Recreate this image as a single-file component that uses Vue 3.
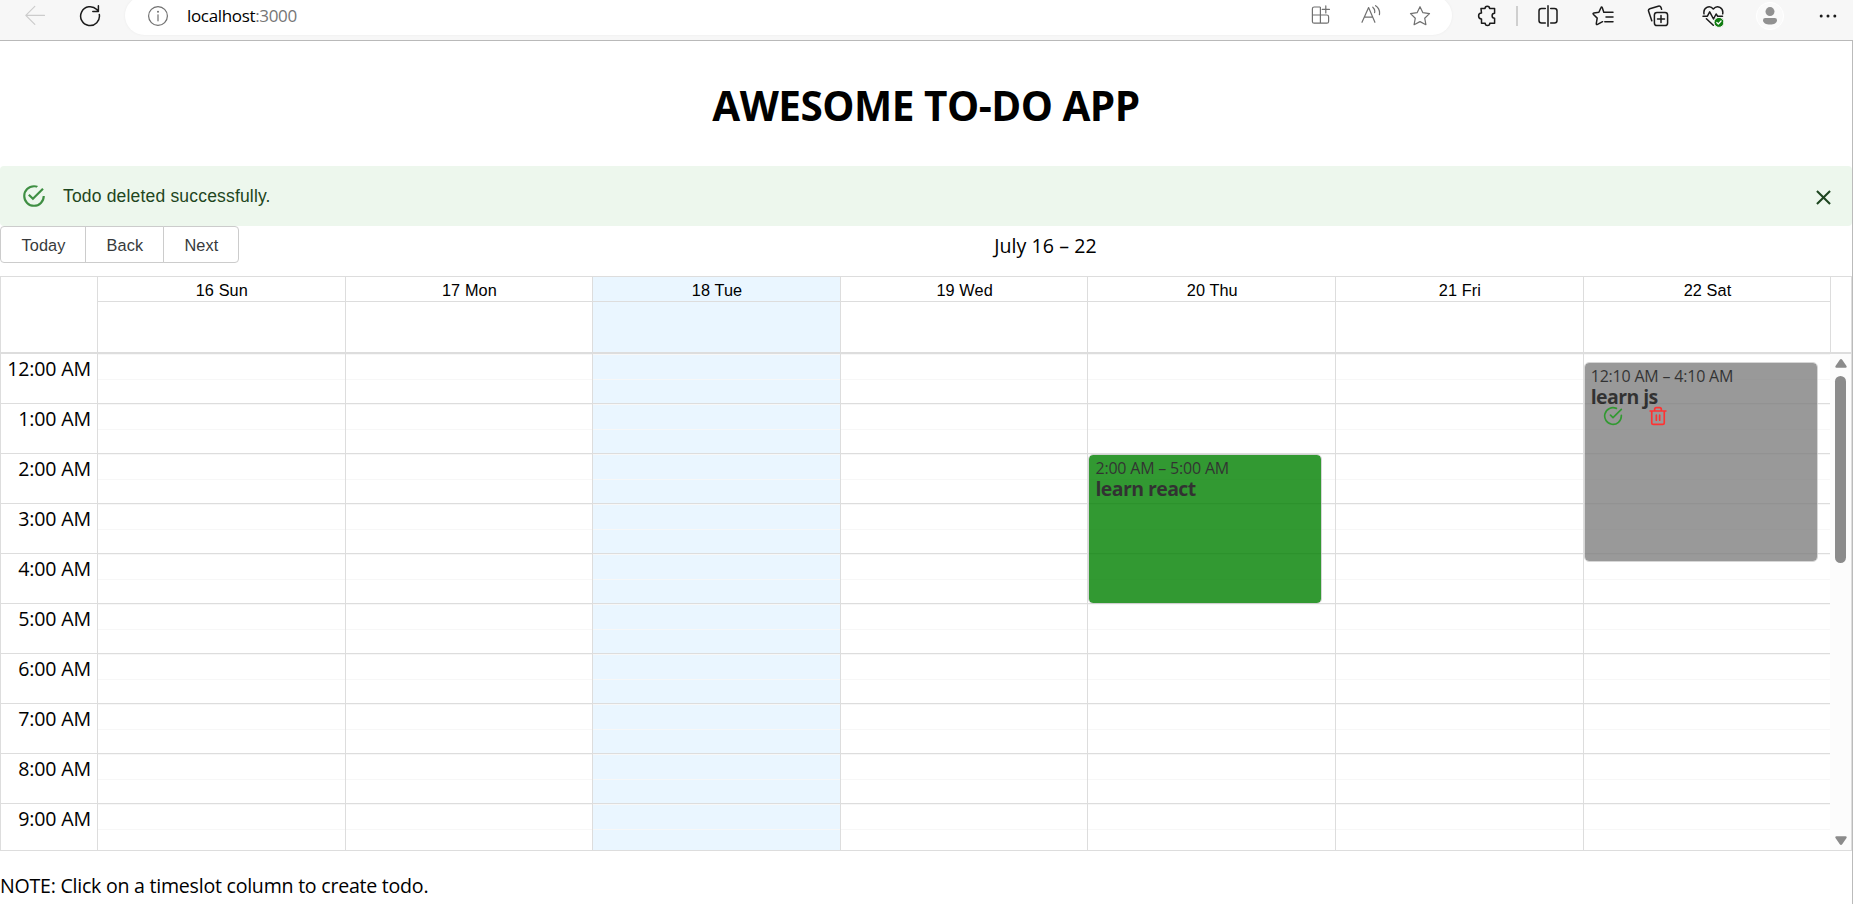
<script setup>
const hours = ['12:00 AM', '1:00 AM', '2:00 AM', '3:00 AM', '4:00 AM', '5:00 AM', '6:00 AM', '7:00 AM', '8:00 AM', '9:00 AM']

const days = [
  { label: '16 Sun' },
  { label: '17 Mon' },
  { label: '18 Tue', today: true },
  { label: '19 Wed' },
  { label: '20 Thu', event: { time: '2:00 AM – 5:00 AM', title: 'learn react', start: 100, length: 150, done: true } },
  { label: '21 Fri' },
  { label: '22 Sat', event: { time: '12:10 AM – 4:10 AM', title: 'learn js', start: 8, length: 200, done: false } },
]
</script>

<template>
  <div class="window">
    <header class="browser">
      <svg class="ico back" width="20" height="20" viewBox="0 0 20 20"><path d="M19.5 10.3H.8M9.8 1.3.8 10.3l9 9" /></svg>
      <svg class="ico reload" width="22" height="22" viewBox="0 0 22 22"><path d="M20.3 9.5A9.4 9.4 0 1 1 17.8 4.6L19.3 6.2M19.4.8v5.6h-5.6" /></svg>
      <div class="address">
        <svg class="ico info" width="22" height="22" viewBox="0 0 22 22"><circle cx="11" cy="11" r="9.4" /><path d="M11 9.8v6" /><circle class="dot" cx="11" cy="6.8" r="1" /></svg>
        <span class="url">localhost<span class="port">:3000</span></span>
        <svg class="ico apps" width="20" height="20" viewBox="0 0 20 20"><path d="M9 2H3.2A1.8 1.8 0 0 0 1.4 3.8v12.6a1.8 1.8 0 0 0 1.8 1.8h12.6a1.8 1.8 0 0 0 1.8-1.8v-4.6a1.8 1.8 0 0 0-1.8-1.8H1.4M9.4 2.4v15.8M14.8.8v7.2M11.2 4.4h7.2" /></svg>
        <svg class="ico read" width="21" height="20" viewBox="0 0 21 20"><path d="M1 17.3 7.6 2.6l6.3 14.7M3.3 12.2h8.5M11.8 2.2a5.5 5.5 0 0 1 1.8 5.4M14.6.7a9 9 0 0 1 3.8 9" /></svg>
        <svg class="ico star" width="22" height="22" viewBox="0 0 22 22"><path d="m11 1.7 2.9 6 6.6.9-4.8 4.6 1.2 6.5-5.9-3.1-5.9 3.1 1.2-6.5-4.8-4.6 6.6-.9z" /></svg>
      </div>
      <svg class="ico puzzle" width="21" height="22" viewBox="0 0 21 22"><path d="M4 3.6h4a2.3 2.3 0 0 1 4.6 0h5v4.7a2.5 2.5 0 1 0 0 5v5h-4.8a2.3 2.3 0 0 1-4.6 0H4.5v-4.4a2.9 2.9 0 0 1 0-5.8z" /></svg>
      <span class="rule"></span>
      <svg class="ico split" width="22" height="22" viewBox="0 0 22 22"><path d="M8.3 3.6H4.5a2.5 2.5 0 0 0-2.5 2.5v9.5a2.5 2.5 0 0 0 2.5 2.5h3.8M13.7 3.6h3.8A2.5 2.5 0 0 1 20 6.1v9.5a2.5 2.5 0 0 1-2.5 2.5h-3.8M11 .8v20.4" /></svg>
      <svg class="ico favs" width="22" height="22" viewBox="0 0 22 22"><path d="m11.8 7.2-1.5-4.4q-.7-1.8-1.4 0L6.9 7.3l-5 .7q-1.5.3-.4 1.5l3.7 3.6-.9 5.4q-.1 1.6 1.3.9l5-2.7M12.8 7.2H21M14 12h7M12.8 16.8H21" /></svg>
      <svg class="ico collect" width="22" height="22" viewBox="0 0 22 22"><rect x="7.4" y="7.4" width="13.2" height="13.2" rx="2.6" /><path d="M14 10.6v7M10.5 14.1h7M4.8 15.7 1.6 6.2Q1 4.3 2.8 3.7l8.4-2.5q2-.6 2.8 1.2l.6 1.8" /></svg>
      <svg class="ico heart" width="23" height="23" viewBox="0 0 23 23"><path d="M2 8.8C1 3 7.4-.8 11.3 4c4-4.8 10.4-1 9.4 4.8M1 11.2h4.4l2.3-4.4 3.8 7.2 2.6-5 1.6 2.2h4.8M4.4 13.7l6.9 6.6" /><circle class="ok" cx="17" cy="17.4" r="5" /><path class="tick" d="m14.8 17.5 1.5 1.5 2.8-3" /></svg>
      <svg class="avatar" width="28" height="28" viewBox="0 0 28 28"><circle cx="14" cy="14" r="13.6" fill="#fafafa" stroke="#fff" /><circle cx="14" cy="9.6" r="4.5" /><path d="M9.2 16h9.6a2.2 2.2 0 0 1 2.2 2.2c0 2.5-3 4.4-7 4.4s-7-1.9-7-4.4A2.2 2.2 0 0 1 9.2 16z" /></svg>
      <svg class="more" width="18" height="6" viewBox="0 0 18 6"><circle cx="2.2" cy="3" r="1.5" /><circle cx="9" cy="3" r="1.5" /><circle cx="15.8" cy="3" r="1.5" /></svg>
    </header>

    <main class="page">
      <h1><span>AWESOME TO-DO APP</span></h1>

      <div class="alert">
        <svg class="success" width="26" height="26" viewBox="0 0 24 24"><path d="M20,12A8,8 0 0,1 12,20A8,8 0 0,1 4,12A8,8 0 0,1 12,4C12.76,4 13.5,4.11 14.2, 4.31L15.77,2.74C14.61,2.26 13.34,2 12,2A10,10 0 0,0 2,12A10,10 0 0,0 12,22A10,10 0 0,0 22,12M7.91,10.08L6.5,11.5L11,16L21,6L19.59,4.58L11,13.17L7.91,10.08Z" /></svg>
        <span class="message">Todo deleted successfully.</span>
        <svg class="close" width="25" height="25" viewBox="0 0 24 24"><path d="M19 6.41L17.59 5 12 10.59 6.41 5 5 6.41 10.59 12 5 17.59 6.41 19 12 13.41 17.59 19 19 17.59 13.41 12z" /></svg>
      </div>

      <div class="toolbar">
        <div class="group">
          <button class="today-btn">Today</button>
          <button class="back-btn">Back</button>
          <button class="next-btn">Next</button>
        </div>
        <div class="range"><span>July 16 – 22</span></div>
      </div>

      <section class="calendar">
        <div class="head">
          <div class="corner"></div>
          <div class="days">
            <div v-for="d in days" :key="d.label" class="day-head" :class="{ today: d.today }">
              <div class="day-label">{{ d.label }}</div>
            </div>
          </div>
          <div class="head-end"></div>
        </div>
        <div class="body">
          <div class="gutter">
            <div v-for="h in hours" :key="h" class="hour"><span>{{ h }}</span></div>
          </div>
          <div class="days">
            <div v-for="d in days" :key="d.label" class="day" :class="{ today: d.today }">
              <div v-for="h in hours" :key="h" class="slots"><i></i><i></i></div>
              <div v-if="d.event" class="event" :class="{ done: d.event.done }" :style="{ top: d.event.start + 'px', height: d.event.length + 'px' }">
                <div class="time">{{ d.event.time }}</div>
                <div class="title">{{ d.event.title }}</div>
                <div v-if="!d.event.done" class="actions">
                  <svg width="20" height="20" viewBox="0 0 24 24" stroke="#008000"><path d="M22 11.08V12a10 10 0 1 1-5.93-9.14M22 4 12 14.01l-3-3" /></svg>
                  <svg width="20" height="20" viewBox="0 0 24 24" stroke="#ff0000"><path d="M2.5 6h19M19.5 6v14a2 2 0 0 1-2 2h-11a2 2 0 0 1-2-2V6m3.5 0V4a2 2 0 0 1 2-2h4a2 2 0 0 1 2 2v2M10 11v6M14 11v6" /></svg>
                </div>
              </div>
            </div>
          </div>
          <div class="scrollbar">
            <svg width="12" height="9" viewBox="0 0 12 9"><path d="M6 0q.7 0 1.2.8L11.5 7q.7 1.7-1 1.7h-9Q-.2 8.7.5 7L4.8.8Q5.3 0 6 0z" /></svg>
            <div class="thumb"></div>
            <svg class="down" width="12" height="9" viewBox="0 0 12 9"><path d="M6 9q.7 0 1.2-.8L11.5 2q.7-1.7-1-1.7h-9Q-.2.3.5 2l4.3 6.2Q5.3 9 6 9z" /></svg>
          </div>
        </div>
      </section>

      <p class="note">NOTE: Click on a timeslot column to create todo.</p>
    </main>
  </div>
</template>

<style>
body { background: #fff; overflow: hidden; }
</style>

<style scoped>
.window { width: 1853px; height: 904px; overflow: hidden; font-family: "Open Sans", "Noto Sans", sans-serif; color: #000; }
.window * { box-sizing: border-box; }

.browser { height: 41px; display: flex; align-items: flex-start; background: #f7f7f7; border-bottom: 1px solid #b9b9b9; overflow: hidden; }
.browser svg { flex: none; }
.ico { fill: none; stroke: #1b1b1b; stroke-width: 1.5; stroke-linecap: round; stroke-linejoin: round; margin-top: 5px; }
.back { margin-left: 25px; stroke: #ccc; stroke-width: 1.2; }
.reload { margin-left: 34px; }
.address { width: 1327px; height: 39px; margin: -4px 0 0 24px; border-radius: 20px; background: #fff; display: flex; align-items: flex-start; box-shadow: 0 0 3px rgba(0, 0, 0, .05); }
.address .ico { stroke: #707070; stroke-width: 1.2; margin-top: 9px; }
.address .info { margin-left: 21.5px; }
.address .dot { fill: #707070; stroke: none; }
.url { margin: 6.5px 0 0 18.5px; width: 1123px; line-height: 26px; font-size: 17px; letter-spacing: -.34px; white-space: nowrap; }
.port { color: #767676; }
.address .apps { margin-left: .5px; }
.address .read { margin-left: 30.5px; }
.address .star { margin-left: 27px; }
.puzzle { margin-left: 25px; }
.rule { width: 2px; height: 20px; margin: 6px 0 0 18px; background: #cfcfcf; }
.split { margin-left: 19px; }
.favs { margin-left: 33px; }
.collect { margin-left: 33px; }
.heart { margin-left: 33px; }
.avatar { margin: 2px 0 0 31px; fill: #919191; }
.more { margin: 13px 0 0 35px; fill: #1b1b1b; }
.heart .ok { fill: #107c10; stroke: #f7f7f7; stroke-width: 1; }
.heart .tick { stroke: #fff; stroke-width: 1.2; }

.page { height: 863px; border-right: 1px solid #bbb; }
h1 { margin: 0; height: 125px; display: flex; justify-content: center; padding-top: 38px; line-height: 54px; font-size: 40.5px; font-weight: 700; letter-spacing: -.5px; white-space: nowrap; }

.alert { height: 60px; display: flex; align-items: center; padding: 0 16px 0 21px; background: #edf7ed; border-radius: 4px; }
.success { fill: #3f8f43; }
.message { margin-left: 16px; font: 17.5px/24px "Liberation Sans", Arial, sans-serif; color: #1e4620; letter-spacing: .18px; }
.close { margin: 3px 0 0 auto; fill: #1e4620; }

.toolbar { height: 50px; display: flex; }
.group { height: 37px; display: flex; flex: none; }
button { height: 37px; padding: 0 0 0 1px; margin: 0; border: 1px solid #ccc; background: #fff; color: #373a3c; font: 16.3px/20px "Liberation Sans", Arial, sans-serif; letter-spacing: .15px; }
button + button { margin-left: -1px; }
.today-btn { width: 86px; border-radius: 4px 0 0 4px; }
.back-btn { width: 79px; }
.next-btn { width: 76px; border-radius: 0 4px 4px 0; }
.range { flex: 1; text-align: center; font-size: 19.6px; line-height: 27px; padding-top: 6px; letter-spacing: .05px; white-space: nowrap; }

.calendar { height: 575px; border: 1px solid #ddd; display: flex; flex-direction: column; }
.head { height: 77px; display: flex; flex: none; border-bottom: 2px solid #ddd; }
.corner, .gutter { width: 96px; flex: none; }
.days { flex: 1; display: grid; grid-template-columns: repeat(7, minmax(0, 1fr)); }
.day-head, .day { border-left: 1px solid #ddd; }
.today { background: #eaf6ff; }
.day-label { height: 25px; padding: 1px 0 0 1px; border-bottom: 1px solid #ddd; text-align: center; font: 16.3px/24px "Liberation Sans", Arial, sans-serif; letter-spacing: .1px; }
.head-end { width: 20.7px; flex: none; border-left: 1px solid #ddd; }
.body { flex: 1; min-height: 0; overflow: hidden; display: flex; align-items: flex-start; }
.hour { height: 50px; border-bottom: 1px solid #ddd; padding: 1px 6px 0 0; text-align: right; font-size: 19.6px; line-height: 27px; letter-spacing: -.15px; white-space: nowrap; }
.day { position: relative; }
.slots { height: 50px; border-bottom: 1px solid #ddd; display: flex; flex-direction: column; }
.slots i { flex: 1; border-top: 1px solid #f7f7f7; }
.event { position: absolute; left: 0; width: 234px; border: 1px solid #ccc; border-radius: 5px; background: #808080; background-clip: padding-box; opacity: .8; padding: 1px 6px; }
.event.done { background-color: #008000; }
.time { font-size: 16px; line-height: 24px; letter-spacing: -.2px; white-space: nowrap; }
.title { font-size: 19.5px; font-weight: 700; line-height: 20px; letter-spacing: -.58px; white-space: nowrap; margin-top: -1px; }
.actions { display: flex; gap: 25px; padding-left: 12px; margin-top: -1px; }
.actions svg { fill: none; stroke-width: 2; stroke-linecap: round; stroke-linejoin: round; }
.scrollbar { width: 20.7px; height: 496px; flex: none; display: flex; flex-direction: column; align-items: center; background: #fcfcfc; padding: 5px 0 5px; }
.scrollbar svg { fill: #8b8b8b; flex: none; }
.thumb { width: 11px; height: 187px; margin-top: 8px; border-radius: 6px; background: #8b8b8b; }
.down { margin-top: auto; }

.note { margin: 0; padding-top: 21px; font-size: 19.6px; line-height: 27px; letter-spacing: -.25px; white-space: nowrap; }
</style>
